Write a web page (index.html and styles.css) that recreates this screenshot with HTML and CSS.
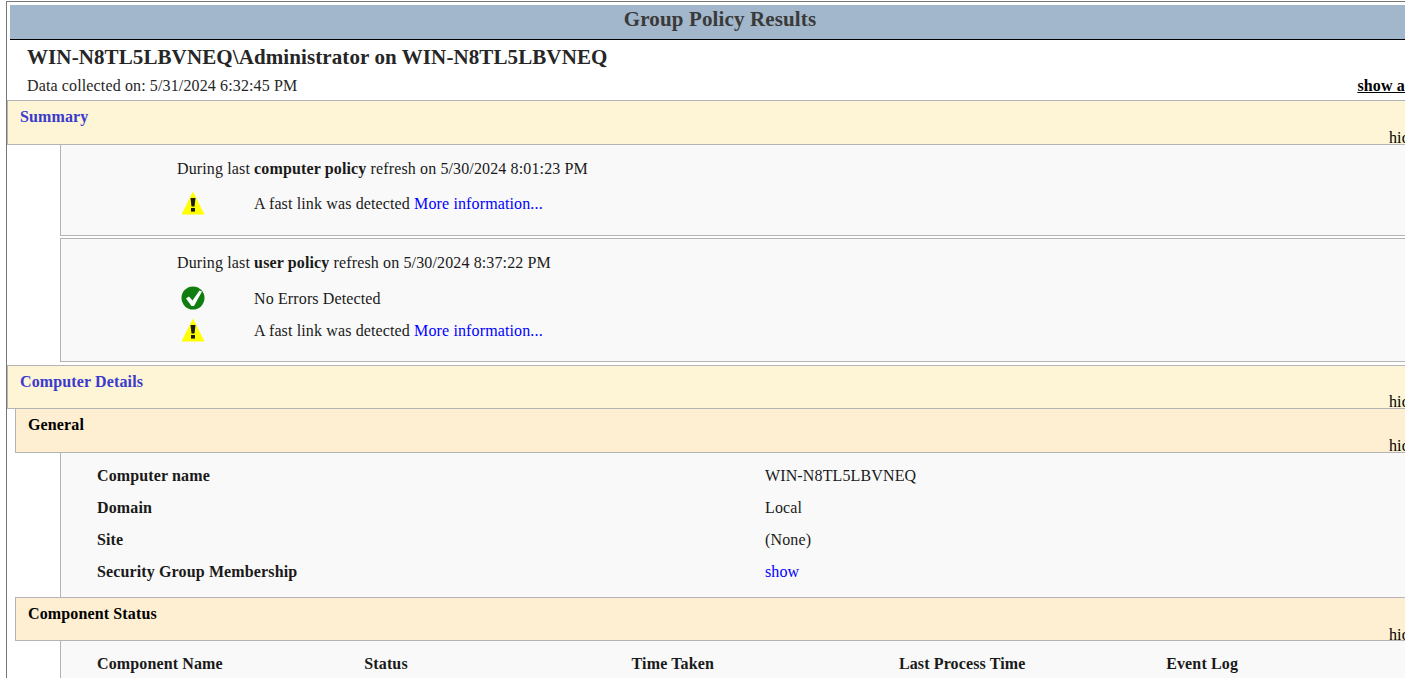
FILE: index.html
```html
<!DOCTYPE html>
<html lang="en">
<head>
<meta charset="utf-8">
<title>Group Policy Results</title>
<link rel="stylesheet" href="styles.css">
</head>
<body>
<svg class="defs" width="0" height="0" aria-hidden="true">
  <symbol id="warn" viewBox="0 0 24 24">
    <path d="M12 0.5 L23.5 23.5 H0.5 Z" fill="#ffff00"/>
    <path d="M9.5 7 H14.5 L13.5 15.5 H10.5 Z" fill="#1a1a1a"/>
    <rect x="10" y="17" width="4" height="3.6" fill="#1a1a1a"/>
  </symbol>
  <symbol id="ok" viewBox="0 0 24 24">
    <circle cx="12" cy="12" r="11.5" fill="#0f7d0f"/>
    <path d="M5 12.5 L8 10.5 L11.5 14.5 L18.5 4.5 L21 5.5 L13 20 L10.5 20 Z" fill="#ffffff"/>
  </symbol>
</svg>
<div class="page">
  <div class="banner">Group Policy Results</div>
  <div class="intro">
    <h1 class="title">WIN-N8TL5LBVNEQ\Administrator on WIN-N8TL5LBVNEQ</h1>
    <div class="meta"><span>Data collected on: 5/31/2024 6:32:45 PM</span><a class="showall" href="#">show all</a></div>
  </div>

  <div class="bar bar-main"><span class="bar-title">Summary</span><span class="hide">hide</span></div>
  <div class="box box-a">
    <p class="refresh">During last <b>computer policy</b> refresh on 5/30/2024 8:01:23 PM</p>
    <div class="status"><svg class="icon"><use href="#warn"/></svg><span>A fast link was detected <a href="#">More information...</a></span></div>
  </div>
  <div class="box box-b">
    <p class="refresh">During last <b>user policy</b> refresh on 5/30/2024 8:37:22 PM</p>
    <div class="status status-ok"><svg class="icon"><use href="#ok"/></svg><span>No Errors Detected</span></div>
    <div class="status"><svg class="icon"><use href="#warn"/></svg><span>A fast link was detected <a href="#">More information...</a></span></div>
  </div>

  <div class="bar bar-main bar-details"><span class="bar-title">Computer Details</span><span class="hide">hide</span></div>
  <div class="bar bar-sub"><span class="bar-title">General</span><span class="hide">hide</span></div>
  <div class="box box-general">
    <div class="grid two"><b>Computer name</b><span>WIN-N8TL5LBVNEQ</span></div>
    <div class="grid two"><b>Domain</b><span>Local</span></div>
    <div class="grid two"><b>Site</b><span>(None)</span></div>
    <div class="grid two"><b>Security Group Membership</b><a href="#">show</a></div>
  </div>
  <div class="bar bar-sub bar-sub-top"><span class="bar-title">Component Status</span><span class="hide">hide</span></div>
  <div class="box box-comp">
    <div class="grid five"><b>Component Name</b><b>Status</b><b>Time Taken</b><b>Last Process Time</b><b>Event Log</b></div>
  </div>
</div>
</body>
</html>
```
FILE: styles.css
```css
html, body {
  margin: 0;
  height: 678px;
  overflow: hidden;
  background: #ffffff;
}
body {
  font-family: "Liberation Serif", "Times New Roman", serif;
  font-size: 16px;
  line-height: 18px;
  letter-spacing: 0.13px;
  color: #1a1a1a;
}
.defs { display: block; height: 0; }
a { color: #0000ff; text-decoration: none; }
.page {
  box-sizing: border-box;
  width: 1424px;
  height: 700px;
  margin: 1px 0 0 6px;
  padding-top: 3px;
  border-top: 1px solid #777777;
  border-left: 1px solid #777777;
}
.banner {
  box-sizing: border-box;
  height: 35px;
  margin-left: 3px;
  padding-top: 2px;
  background: #a2b7cb;
  border-bottom: 1px solid #000000;
  text-align: center;
  font-size: 21px;
  line-height: 24px;
  font-weight: bold;
  color: #3a3a3a;
}
.intro { padding: 0 0 0 20px; height: 60px; box-sizing: border-box; }
.title {
  margin: 0;
  padding-top: 5px;
  font-size: 21px;
  line-height: 24px;
  font-weight: bold;
  letter-spacing: 0.1px;
  color: #262626;
}
.meta {
  display: flex;
  justify-content: space-between;
  margin-top: 8px;
  font-size: 16px;
  line-height: 18px;
  color: #262626;
}
.showall {
  color: #000000;
  font-weight: bold;
  text-decoration: underline;
  margin-right: 16px;
}
.bar {
  box-sizing: border-box;
  position: relative;
  height: 45px;
  border: 1px solid #b4b4b4;
  border-right: 0;
  padding: 7px 0 0 12px;
  font-weight: bold;
}
.bar-main { background: #fdf5d6; }
.bar-details { margin-top: 3px; height: 44px; }
.bar-sub {
  background: #feefd2;
  margin-left: 8px;
  height: 44px;
  border-top: 0;
  color: #000000;
}
.bar-sub-top { border-top: 1px solid #b4b4b4; height: 44px; padding-top: 7px; }
.bar-title { display: block; }
.bar-main .bar-title { color: #3a3acd; }
.hide {
  position: absolute;
  right: 13px;
  bottom: -3px;
  font-weight: normal;
  color: #000000;
}
.bar-sub-top .hide { bottom: -4px; }
.box {
  box-sizing: border-box;
  margin-left: 53px;
  background: #f9f9f9;
  border-left: 1px solid #b4b4b4;
}
.box-a, .box-b { border-bottom: 1px solid #b4b4b4; padding: 15px 0 0 116px; }
.box-a { height: 91px; }
.box-a .refresh { margin-bottom: 13px; }
.box-b { height: 124px; border-top: 1px solid #b4b4b4; margin-top: 2px; }
.refresh { margin: 0 0 14px; }
.status {
  display: flex;
  align-items: center;
  gap: 49px;
  height: 24px;
  margin-left: 4px;
}
.status span { padding-top: 2px; }
.status-ok { margin-bottom: 8px; }
.icon { width: 24px; height: 24px; flex: none; }
.box-general { height: 144px; padding: 14px 0 0 36px; }
.box-comp { height: 100px; padding: 14px 0 0 36px; }
.grid { display: grid; height: 32px; }
.two { grid-template-columns: 668px 668px; }
.five { grid-template-columns: repeat(5, 267.3px); }
```
